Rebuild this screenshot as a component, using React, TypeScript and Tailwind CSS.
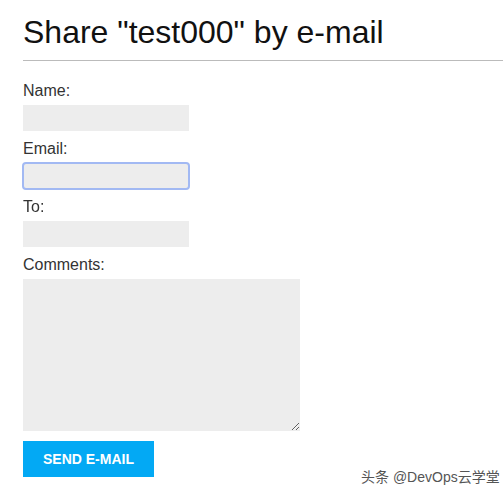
import { useEffect, useRef } from 'react'

export default function App() {
  const emailRef = useRef<HTMLInputElement>(null)

  useEffect(() => {
    emailRef.current?.focus()
  }, [])

  return (
    <div className="relative min-h-[496px] bg-white font-['Liberation_Sans',Arial,sans-serif]">
      <div className="pl-[23px]">
        {/* Title */}
        <h1 className="pt-[14px] pb-[10px] text-[32px] leading-[36px] font-normal text-[#111] border-b border-[#bbbbbb]">
          Share "test000" by e-mail
        </h1>

        {/* Form */}
        <form className="mt-[21px] flex flex-col items-start text-[16px] text-[#333]" onSubmit={(e) => e.preventDefault()}>
          <label className="leading-[18px] mb-[5px]">Name:</label>
          <input type="text" className="w-[166px] h-[26px] mb-[9px] bg-[#ededed] outline-none" />

          <label className="leading-[18px] mb-[5px]">Email:</label>
          <input
            ref={emailRef}
            type="text"
            className="w-[166px] h-[26px] mb-[9px] bg-[#ededed] rounded-[3px] outline-none focus:outline-2 focus:outline-solid focus:outline-[#a2b9f3] focus:outline-offset-[-1px]"
          />

          <label className="leading-[18px] mb-[5px]">To:</label>
          <input type="text" className="w-[166px] h-[26px] mb-[9px] bg-[#ededed] outline-none" />

          <label className="leading-[18px] mb-[5px]">Comments:</label>
          <textarea className="w-[277px] h-[152px] mb-[10px] bg-[#ededed] outline-none resize" />

          <button
            type="submit"
            className="w-[131px] h-[36px] bg-[#03a9f4] text-white text-[14px] font-bold uppercase"
          >
            Send E-mail
          </button>
        </form>
      </div>

      {/* Watermark */}
      <div className="absolute left-[361px] top-[468px] text-[14px] leading-[18px] text-[#555] font-['Liberation_Sans','Noto_Sans_CJK_SC',sans-serif] whitespace-nowrap">
        头条 @DevOps云学堂
      </div>
    </div>
  )
}
